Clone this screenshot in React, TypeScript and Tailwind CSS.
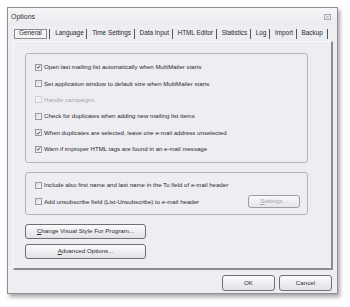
import React from "react";

const font = { fontFamily: '"Liberation Sans", Arial, sans-serif' };

function Check({ checked, disabled }: { checked?: boolean; disabled?: boolean }) {
  return (
    <span
      className={
        "flex items-center justify-center w-[7px] h-[7px] border shrink-0 " +
        (disabled ? "border-[#cfcfd4] bg-[#f3f3f5]" : "border-[#9a9aa2] bg-gradient-to-br from-[#dcdce0] to-[#fbfbfc]")
      }
    >
      {checked && (
        <svg width="6" height="6" viewBox="0 0 6 6">
          <path d="M1 3 L2.4 4.5 L5 1.3" stroke="#3a3a4a" strokeWidth="1" fill="none" />
        </svg>
      )}
    </span>
  );
}

function Row({ label, checked, disabled }: { label: string; checked?: boolean; disabled?: boolean }) {
  return (
    <div className="flex items-center gap-[2px] h-[16.4px]">
      <Check checked={checked} disabled={disabled} />
      <span className={"text-[6.1px] leading-none whitespace-nowrap " + (disabled ? "text-[#a8a8ae]" : "text-[#2a2a2e]")}>{label}</span>
    </div>
  );
}

function Btn({ children, className, disabled }: { children: React.ReactNode; className?: string; disabled?: boolean }) {
  return (
    <div
      className={
        "flex items-center justify-center rounded-[3px] border text-[6.2px] leading-none " +
        (disabled
          ? "border-[#9c9ca4] bg-gradient-to-b from-[#f8f8fa] to-[#e6e6ea] text-[#a4a4aa] "
          : "border-[#6e6e76] bg-gradient-to-b from-[#fbfbfc] to-[#e2e2e7] text-[#2a2a2e] ") +
        (className || "")
      }
    >
      {children}
    </div>
  );
}

const tabs = ["Language", "Time Settings", "Data Input", "HTML Editor", "Statistics", "Log", "Import", "Backup"];

export default function App() {
  return (
    <div className="w-[350px] h-[307px] bg-white overflow-hidden" style={font}>
      <div className="ml-[7px] mt-[7px] w-[331px] h-[287px] border border-[#8e8e96] bg-[#eeedf2] shadow-[2px_3px_4px_rgba(0,0,0,0.35)] flex flex-col">
        {/* title bar */}
        <div className="h-[17px] flex items-center justify-between pl-[3px] pr-[6px] bg-gradient-to-b from-[#f6f6f8] to-[#ebeaef]">
          <span className="text-[7px] text-[#333] leading-none">Options</span>
          <svg width="7" height="6" viewBox="0 0 7 6">
            <rect x="0.5" y="0.5" width="6" height="5" fill="none" stroke="#a8a8b0" />
            <path d="M2 1.8 L5 4.2 M5 1.8 L2 4.2" stroke="#a8a8b0" strokeWidth="0.8" />
          </svg>
        </div>
        {/* tabs */}
        <div className="flex items-center h-[15px] mt-[1px] pl-[6px]">
          <div className="border border-[#8a8a92] px-[4px] h-[10px] flex items-center text-[6.4px] leading-none text-[#2a2a2e] bg-[#f4f4f7]">General</div>
          {tabs.map((t) => (
            <div key={t} className="flex items-center">
              <span className="w-[1px] h-[10px] bg-[#55555c] ml-[2.5px] mr-[5px]" />
              <span className="text-[6.4px] leading-none text-[#2a2a2e] whitespace-nowrap">{t}</span>
            </div>
          ))}
          <span className="w-[1px] h-[10px] bg-[#55555c] ml-[4px]" />
        </div>
        {/* panel */}
        <div className="ml-[5px] w-[320px] h-[229px] border-r-2 border-b-2 border-r-[#8c8c94] border-b-[#8c8c94] border-l border-t border-l-[#fafafc] border-t-[#fafafc] pt-[11px] pl-[11px] flex flex-col">
          <div className="w-[283px] h-[110px] border border-[#b4b4bc] rounded-[3px] pt-[5px] pl-[9px] flex flex-col">
            <Row checked label="Open last mailing list automatically when MultiMailer starts" />
            <Row label="Set application window to default size when MultiMailer starts" />
            <Row disabled label="Handle campaigns" />
            <Row label="Check for duplicates when adding new mailing list items" />
            <Row checked label="When duplicates are selected, leave one e-mail address unselected" />
            <Row checked label="Warn if improper HTML tags are found in an e-mail message" />
          </div>
          <div className="mt-[9px] w-[283px] h-[43px] border border-[#b4b4bc] rounded-[3px] pt-[4px] pl-[9px] pr-[7px] flex flex-col">
            <Row label="Include also first name and last name in the To field of e-mail header" />
            <div className="flex items-center justify-between">
              <Row label="Add unsubscribe field (List-Unsubscribe) to e-mail header" />
              <Btn disabled className="w-[52px] h-[13px]">
                <span><u>S</u>ettings...</span>
              </Btn>
            </div>
          </div>
          <Btn className="mt-[9px] w-[121px] h-[15px]">
            <span><u>C</u>hange Visual Style For Program...</span>
          </Btn>
          <Btn className="mt-[5px] w-[121px] h-[15px]">
            <span><u>A</u>dvanced Options...</span>
          </Btn>
        </div>
        {/* bottom buttons */}
        <div className="flex justify-end gap-[4px] pr-[5px] mt-[5px]">
          <Btn className="w-[53px] h-[16px]">OK</Btn>
          <Btn className="w-[53px] h-[16px]">Cancel</Btn>
        </div>
      </div>
    </div>
  );
}
